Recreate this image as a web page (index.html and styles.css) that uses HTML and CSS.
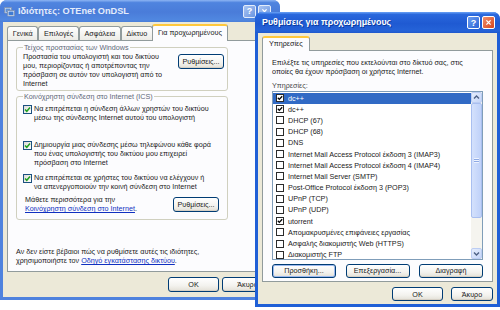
FILE: index.html
```html
<!DOCTYPE html>
<html lang="el">
<head>
    <meta charset="UTF-8">
    <title>Ρυθμίσεις για προχωρημένους</title>
    <link rel="stylesheet" href="styles.css">
</head>
<body>
<div class="desktop">

    <!-- back window, inactive -->
    <div class="win win-props inactive">
        <div class="titlebar">
            <svg class="app-icon" viewBox="0 0 11 11">
                <rect x="0.5" y="1.5" width="7" height="5.5" rx="0.5" fill="#dfe9f7" stroke="#7f95b8"/>
                <rect x="1.5" y="2.5" width="5" height="3.5" fill="#5b8fd8"/>
                <rect x="3.5" y="4.5" width="7" height="5.5" rx="0.5" fill="#eef3fa" stroke="#7f95b8"/>
                <rect x="4.5" y="5.5" width="5" height="3.5" fill="#3f7bd3"/>
            </svg>
            <span class="title">Ιδιότητες: OTEnet OnDSL</span>
            <span class="cap cap-help">?</span>
            <span class="cap cap-close">
                <svg viewBox="0 0 13 13"><path d="M4 4l5 5M9 4l-5 5" stroke="#fff" stroke-width="1.6"/></svg>
            </span>
        </div>
        <div class="client">
            <div class="tabs">
                <span class="tab">Γενικά</span>
                <span class="tab">Επιλογές</span>
                <span class="tab">Ασφάλεια</span>
                <span class="tab">Δίκτυο</span>
                <span class="tab active">Για προχωρημένους</span>
            </div>
            <div class="panel panel-props">
                <fieldset class="group group-fw">
                    <legend>Τείχος προστασίας των Windows</legend>
                    <div class="group-line">
                        <p>Προστασία του υπολογιστή και του δικτύου<br>μου, περιορίζοντας ή αποτρέποντας την<br>πρόσβαση σε αυτόν τον υπολογιστή από το<br>Internet</p>
                        <button class="btn btn-set">Ρυθμίσεις...</button>
                    </div>
                </fieldset>

                <fieldset class="group group-ics">
                    <legend>Κοινόχρηστη σύνδεση στο Internet (ICS)</legend>
                    <div class="check-row row-1">
                        <span class="xpcheck"><svg viewBox="0 0 7 7"><path d="M1 3.4l1.8 1.9L6 1.6" fill="none" stroke="#21a121" stroke-width="1.5"/></svg></span>
                        <p>Να επιτρέπεται η σύνδεση άλλων χρηστών του δικτύου<br>μέσω της σύνδεσης Internet αυτού του υπολογιστή</p>
                    </div>
                    <div class="check-row row-2">
                        <span class="xpcheck"><svg viewBox="0 0 7 7"><path d="M1 3.4l1.8 1.9L6 1.6" fill="none" stroke="#21a121" stroke-width="1.5"/></svg></span>
                        <p>Δημιουργία μιας σύνδεσης μέσω τηλεφώνου κάθε φορά<br>που ένας υπολογιστής του δικτύου μου επιχειρεί<br>πρόσβαση στο Internet</p>
                    </div>
                    <div class="check-row row-3">
                        <span class="xpcheck"><svg viewBox="0 0 7 7"><path d="M1 3.4l1.8 1.9L6 1.6" fill="none" stroke="#21a121" stroke-width="1.5"/></svg></span>
                        <p>Να επιτρέπεται σε χρήστες του δικτύου να ελέγχουν ή<br>να απενεργοποιούν την κοινή σύνδεση στο Internet</p>
                    </div>
                    <div class="learn">
                        <p>Μάθετε περισσότερα για την<br><a href="#">Κοινόχρηστη σύνδεση στο Internet</a>.</p>
                        <button class="btn btn-set">Ρυθμίσεις...</button>
                    </div>
                </fieldset>

                <p class="note">Αν δεν είστε βέβαιοι πώς να ρυθμίσετε αυτές τις ιδιότητες,<br>χρησιμοποιήστε τον <a href="#">Οδηγό εγκατάστασης δικτύου</a>.</p>
            </div>
            <div class="dlg-buttons">
                <button class="btn btn-dlg">OK</button>
                <button class="btn btn-dlg">Άκυρο</button>
            </div>
        </div>
    </div>

    <!-- front window -->
    <div class="win win-adv">
        <div class="titlebar">
            <span class="title">Ρυθμίσεις για προχωρημένους</span>
            <span class="cap cap-help">?</span>
            <span class="cap cap-close">
                <svg viewBox="0 0 13 13"><path d="M4 4l5 5M9 4l-5 5" stroke="#fff" stroke-width="1.6"/></svg>
            </span>
        </div>
        <div class="client">
            <div class="tabs">
                <span class="tab active">Υπηρεσίες</span>
            </div>
            <div class="panel panel-adv">
                <p>Επιλέξτε τις υπηρεσίες που εκτελούνται στο δίκτυό σας, στις<br>οποίες θα έχουν πρόσβαση οι χρήστες Internet.</p>
                <p class="list-label">Υπηρεσίες:</p>
                <div class="listbox">
                    <ul class="services">
                        <li class="sel"><span class="lcheck on"></span>dc++</li>
                        <li><span class="lcheck on"></span>dc++</li>
                        <li><span class="lcheck"></span>DHCP (67)</li>
                        <li><span class="lcheck"></span>DHCP (68)</li>
                        <li><span class="lcheck"></span>DNS</li>
                        <li><span class="lcheck"></span>Internet Mail Access Protocol έκδοση 3 (IMAP3)</li>
                        <li><span class="lcheck"></span>Internet Mail Access Protocol έκδοση 4 (IMAP4)</li>
                        <li><span class="lcheck"></span>Internet Mail Server (SMTP)</li>
                        <li><span class="lcheck"></span>Post-Office Protocol έκδοση 3 (POP3)</li>
                        <li><span class="lcheck"></span>UPnP (TCP)</li>
                        <li><span class="lcheck"></span>UPnP (UDP)</li>
                        <li><span class="lcheck on"></span>utorrent</li>
                        <li><span class="lcheck"></span>Απομακρυσμένες επιφάνειες εργασίας</li>
                        <li><span class="lcheck"></span>Ασφαλής διακομιστής Web (HTTPS)</li>
                        <li><span class="lcheck"></span>Διακομιστής FTP</li>
                    </ul>
                    <div class="vscroll">
                        <span class="sb-btn"><svg viewBox="0 0 9 9"><path d="M2 5.5l2.5-2.5 2.5 2.5" fill="none" stroke="#4d6185" stroke-width="1.4"/></svg></span>
                        <span class="sb-thumb"><span class="grip"></span></span>
                        <span class="sb-track"></span>
                        <span class="sb-btn"><svg viewBox="0 0 9 9"><path d="M2 3.5l2.5 2.5 2.5-2.5" fill="none" stroke="#4d6185" stroke-width="1.4"/></svg></span>
                    </div>
                </div>
                <div class="list-buttons">
                    <button class="btn btn-list default">Προσθήκη...</button>
                    <button class="btn btn-list">Επεξεργασία...</button>
                    <button class="btn btn-list">Διαγραφή</button>
                </div>
            </div>
            <div class="dlg-buttons">
                <button class="btn btn-dlg">OK</button>
                <button class="btn btn-dlg btn-cancel">Άκυρο</button>
            </div>
        </div>
    </div>

</div>
</body>
</html>
```

FILE: styles.css
```css
:root {
    --frame: #1f5fd6;
    --frame-inactive: #4f82de;
    --face: #ece9d8;
    --panel: #fcfcfe;
    --tab-border: #919b9c;
    --group-border: #d0d0bf;
    --btn-border: #003c74;
    --select: #316ac5;
    --link: #1030c0;
    --text: #1a1a1a;
}

* {
    box-sizing: border-box;
}

body {
    margin: 0;
    background: #fff;
    font-family: "Liberation Sans", Arial, sans-serif;
    font-size: 7.2px;
    line-height: 9px;
    color: var(--text);
}

p {
    margin: 0;
    white-space: nowrap;
}

a {
    color: var(--link);
}

.desktop {
    position: relative;
    width: 500px;
    height: 310px;
    overflow: hidden;
}

/* windows */
.win {
    position: absolute;
    display: flex;
    flex-direction: column;
    background: var(--frame);
    border-radius: 7px 7px 0 0;
}
.win-props {
    left: 0;
    top: 0;
    width: 280px;
    height: 300px;
    background: var(--frame-inactive);
}
.win-adv {
    left: 255px;
    top: 12px;
    width: 245px;
    height: 295px;
}

.titlebar {
    flex: none;
    height: 22px;
    display: flex;
    align-items: center;
    gap: 2px;
    padding: 0 5px 0 4px;
    border-radius: 7px 7px 0 0;
    background: linear-gradient(#6aa2f5, #2a68dc 12%, #1f5ad2 55%, #2563d8 90%, #1f58cc);
    color: #fff;
}
.inactive .titlebar {
    padding-right: 9px;
    background: linear-gradient(#8db5f3, #4f84df 12%, #4a7cd9 55%, #5087e0 90%, #4a7ed8);
}
.win-adv .titlebar {
    height: 21px;
    padding-left: 7px;
}

.app-icon {
    width: 11px;
    height: 11px;
    margin-right: 1px;
}

.title {
    flex: 1;
    font-weight: bold;
    font-size: 9.2px;
    white-space: nowrap;
    text-shadow: 1px 1px 0 #0b3a9e;
}
.win-adv .title {
    font-size: 8.9px;
}
.inactive .title {
    color: #e4ecfb;
    text-shadow: none;
}

.cap {
    width: 13px;
    height: 13px;
    display: flex;
    align-items: center;
    justify-content: center;
    border: 1px solid #fff;
    border-radius: 2px;
    font: bold 9px "Liberation Sans", Arial, sans-serif;
    color: #fff;
}
.cap svg {
    width: 13px;
    height: 13px;
}
.cap-help {
    background: linear-gradient(135deg, #6c9ef0, #2c64d6);
}
.cap-close {
    background: linear-gradient(135deg, #f0906c, #d8441c);
}
.inactive .cap {
    background: linear-gradient(135deg, #a9c4f2, #6a95e2);
    border-color: #e3ecfb;
}

.client {
    flex: 1;
    display: flex;
    flex-direction: column;
    margin: 0 3px 3px;
    padding: 2px 4px 0;
    background: var(--face);
}
.win-adv .client {
    padding-top: 3px;
}

/* tabs */
.tabs {
    position: relative;
    display: flex;
    align-items: flex-end;
    height: 17px;
    margin-bottom: -1px;
}
.win-adv .tabs {
    height: 15px;
    padding-left: 1px;
}

.tab {
    height: 14px;
    margin-bottom: 1px;
    padding: 0 4.7px;
    border: 1px solid var(--tab-border);
    border-bottom: 0;
    border-radius: 3px 3px 0 0;
    background: linear-gradient(#fff, #ecebe6);
    line-height: 13px;
    white-space: nowrap;
}
.tab.active {
    height: 17px;
    margin: 0 -1px;
    padding: 0 5px;
    border-top: 2px solid #ffc83c;
    background: var(--panel);
    line-height: 14px;
}
.win-adv .tab.active {
    height: 15px;
    padding: 0 6px;
    line-height: 12px;
}

.panel {
    height: 232px;
    flex: none;
    border: 1px solid var(--tab-border);
    background: var(--panel);
}

/* properties page */
.panel-props {
    display: flex;
    flex-direction: column;
    padding: 2px 8px 6px;
}

.group {
    width: 212px;
    margin: 0;
    padding: 0 3px 2px 6px;
    border: 1px solid var(--group-border);
    border-radius: 3px;
}
.group legend {
    padding: 0 1px;
    color: #5f6878;
}
.group-ics {
    margin-top: 1px;
    padding-top: 3px;
    padding-bottom: 6px;
}

.group-line {
    display: flex;
    justify-content: space-between;
    align-items: flex-start;
}
.group-line .btn-set {
    margin-top: 1.5px;
}

.check-row {
    display: flex;
    align-items: flex-start;
    gap: 2px;
}
.row-2 {
    margin-top: 18px;
}
.row-3 {
    margin-top: 6px;
}

.xpcheck {
    flex: none;
    width: 9px;
    height: 9px;
    margin-top: 0.5px;
    display: flex;
    align-items: center;
    justify-content: center;
    border: 1px solid #1c5180;
    background: linear-gradient(135deg, #dcdcd7, #fff);
}
.xpcheck svg {
    width: 7px;
    height: 7px;
}

.learn {
    display: flex;
    justify-content: space-between;
    align-items: center;
    margin-top: 4px;
    padding-left: 2px;
}
.learn .btn-set {
    margin-right: 5px;
}

.note {
    margin-top: auto;
}

/* buttons */
.btn {
    height: 15px;
    padding: 0;
    border: 1px solid var(--btn-border);
    border-radius: 3px;
    background: linear-gradient(#fff, #f3f2ee 60%, #e3e0d6);
    box-shadow: inset 0 -1px 0 #d6d0c5;
    font: inherit;
    color: var(--text);
}
.btn-set {
    width: 46px;
}
.btn-dlg {
    width: 51px;
}

.dlg-buttons {
    display: flex;
    justify-content: flex-end;
    gap: 3px;
    margin-top: 5px;
}
.win-adv .dlg-buttons {
    gap: 8px;
}
.win-adv .btn-dlg {
    height: 14px;
}
.win-adv .btn-cancel {
    width: 42px;
}

/* services page */
.panel-adv {
    display: flex;
    flex-direction: column;
    padding: 7px 9px 0;
}

.list-label {
    margin-top: 4.5px;
    color: #4a4a4a;
}

.listbox {
    height: 169px;
    margin-top: 1.5px;
    display: flex;
    border: 1px solid #7f9db9;
    background: #fff;
}

.services {
    flex: 1;
    margin: 0;
    padding: 0.5px 0 0;
    list-style: none;
    overflow: hidden;
}
.services li {
    height: 11.2px;
    display: flex;
    align-items: center;
    gap: 4px;
    padding-left: 3px;
    white-space: nowrap;
}
.services li.sel {
    background: var(--select);
    color: #fff;
}

.lcheck {
    flex: none;
    width: 8px;
    height: 8px;
    border: 1px solid #2b2b2b;
    background: #fff;
}
.lcheck.on {
    background: #fff url("data:image/svg+xml,%3Csvg xmlns='http://www.w3.org/2000/svg' viewBox='0 0 6 6'%3E%3Cpath d='M0.8 2.8l1.5 1.6L5.2 1.2' fill='none' stroke='%23000' stroke-width='1.3'/%3E%3C/svg%3E") center / 6px 6px no-repeat;
}

.vscroll {
    flex: none;
    width: 11px;
    display: flex;
    flex-direction: column;
    background: #f5f4ef;
}
.sb-btn {
    height: 11px;
    display: flex;
    align-items: center;
    justify-content: center;
    border: 1px solid #bccdf3;
    border-radius: 2px;
    background: linear-gradient(135deg, #e6eefc, #c5d5f8);
}
.sb-btn svg {
    width: 9px;
    height: 9px;
}
.sb-thumb {
    height: 115px;
    display: flex;
    align-items: center;
    justify-content: center;
    border: 1px solid #a9bff0;
    border-radius: 2px;
    background: linear-gradient(90deg, #d4e1fc, #bfd1f9);
}
.grip {
    width: 5px;
    height: 5px;
    background: repeating-linear-gradient(#eef3fe 0 1px, #8ea9e4 1px 2px);
}
.sb-track {
    flex: 1;
}

.list-buttons {
    display: flex;
    justify-content: space-between;
    margin-top: 3.5px;
}
.btn-list {
    width: 64px;
    height: 14px;
}
.btn-list.default {
    box-shadow: inset 0 0 0 1px #9bb8ee, inset 0 -1px 0 #d6d0c5;
}
```
